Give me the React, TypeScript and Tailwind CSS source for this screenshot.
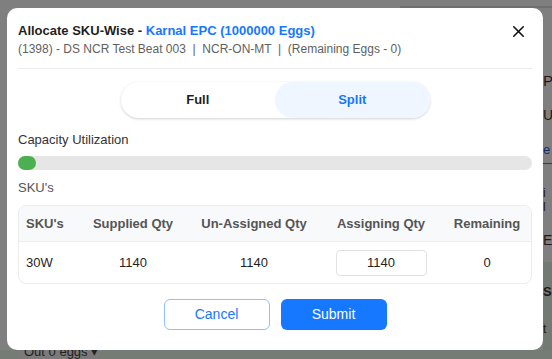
import { X } from 'lucide-react';

// Allocation modal laid over a dimmed dashboard page.
export default function App() {
  const cols = 'grid grid-cols-[60px_108px_134px_120px_92px] items-center';

  return (
    <div
      className="relative w-[552px] h-[359px] overflow-hidden bg-[#7f7f7f]"
      style={{ fontFamily: '"Liberation Sans", Arial, sans-serif' }}
    >
      {/* dimmed page behind the overlay */}
      <div className="absolute left-[400px] top-[6px] w-[160px] h-[2px] bg-[#6f6f6f]" />
      <div className="absolute left-[543px] top-[70px] text-[15px] text-[#1a1a1a]">P</div>
      <div className="absolute left-[543px] top-[105px] text-[14px] text-[#1a1a1a]">U</div>
      <div className="absolute left-[543px] top-[140px] text-[13px] text-[#10306b]">e</div>
      <div className="absolute left-[543px] top-[163px] w-[10px] h-[1px] bg-[#1d3f85]" />
      <div className="absolute left-[543px] top-[186px] text-[12px] leading-[14px] text-[#1a1a1a]">i<br />l</div>
      <div className="absolute left-[543px] top-[230px] text-[14px] text-[#1a1a1a]">E</div>
      <div className="absolute left-[543px] top-[262px] w-[10px] h-[97px] bg-[#737a73]" />
      <div className="absolute left-[543px] top-[282px] text-[13px] font-bold text-[#1a1a1a]">S</div>
      <div className="absolute left-[543px] top-[320px] text-[12px] text-[#1a1a1a]">t</div>
      <div className="absolute left-0 top-[350px] w-[552px] h-[9px] bg-[#757c75]" />
      <div className="absolute left-[18px] top-[344px] w-[80px] h-[15px] bg-[#7a7a7a] text-[13px] leading-[15px] text-[#222] pl-[6px] whitespace-nowrap">
        Out 0 eggs ▾
      </div>

      {/* modal */}
      <div className="absolute left-[7px] top-[8px] w-[536px] h-[342px] bg-white rounded-[10px] px-[11px] pt-[13px]">
        <div className="flex items-start justify-between">
          <div>
            <div className="text-[13px] leading-[19px] font-bold text-[#1f1f1f]">
              Allocate SKU-Wise - <span className="text-[#1677ff]">Karnal EPC (1000000 Eggs)</span>
            </div>
            <div className="mt-[1px] text-[12px] leading-[17px] text-[#5f5f5f]">
              (1398) - DS NCR Test Beat 003 &nbsp;|&nbsp; NCR-ON-MT &nbsp;|&nbsp; (Remaining Eggs - 0)
            </div>
          </div>
          <X className="mt-[1px] mr-[4px] w-[19px] h-[19px] text-[#111]" strokeWidth={2} />
        </div>

        <div className="mt-[10px] h-px bg-[#ebebeb]" />

        <div className="mt-[13px] flex justify-center">
          <div className="flex w-[309px] h-[36px] rounded-full bg-white shadow-[0_1px_3px_rgba(0,0,0,0.18)]">
            <div className="flex-1 flex items-center justify-center text-[13px] font-bold text-[#1f1f1f]">Full</div>
            <div className="flex-1 flex items-center justify-center rounded-full bg-[#f0f6ff] text-[13px] font-bold text-[#1677ff]">
              Split
            </div>
          </div>
        </div>

        <div className="mt-[13px] text-[13px] leading-[18px] text-[#333]">Capacity Utilization</div>
        <div className="mt-[7px] h-[14px] rounded-full bg-[#e6e6e6]">
          <div className="w-[18px] h-[14px] rounded-full bg-[#4caf50]" />
        </div>

        <div className="mt-[9px] text-[13px] leading-[18px] text-[#555]">SKU's</div>

        <div className="mt-[8px] rounded-[8px] border border-[#ececec] overflow-hidden">
          <div className={`${cols} h-[36px] bg-[#f8f9fa] border-b border-[#ececec] text-[13px] font-bold text-[#555]`}>
            <div className="pl-[7px]">SKU's</div>
            <div className="text-center">Supplied Qty</div>
            <div className="text-center">Un-Assigned Qty</div>
            <div className="text-center">Assigning Qty</div>
            <div className="text-center">Remaining</div>
          </div>
          <div className={`${cols} h-[41px] text-[13px] text-[#1f1f1f]`}>
            <div className="pl-[7px]">30W</div>
            <div className="text-center">1140</div>
            <div className="text-center">1140</div>
            <div className="flex justify-center">
              <div className="w-[91px] h-[26px] flex items-center justify-center rounded-[4px] border border-[#e2e2e2]">1140</div>
            </div>
            <div className="text-center">0</div>
          </div>
        </div>

        <div className="mt-[15px] flex justify-center gap-[11px]">
          <button className="w-[106px] h-[31px] rounded-[6px] border border-[#8fbfff] bg-white text-[14px] text-[#1677ff]">
            Cancel
          </button>
          <button className="w-[106px] h-[31px] rounded-[6px] bg-[#1677ff] text-[14px] text-white">Submit</button>
        </div>
      </div>
    </div>
  );
}
